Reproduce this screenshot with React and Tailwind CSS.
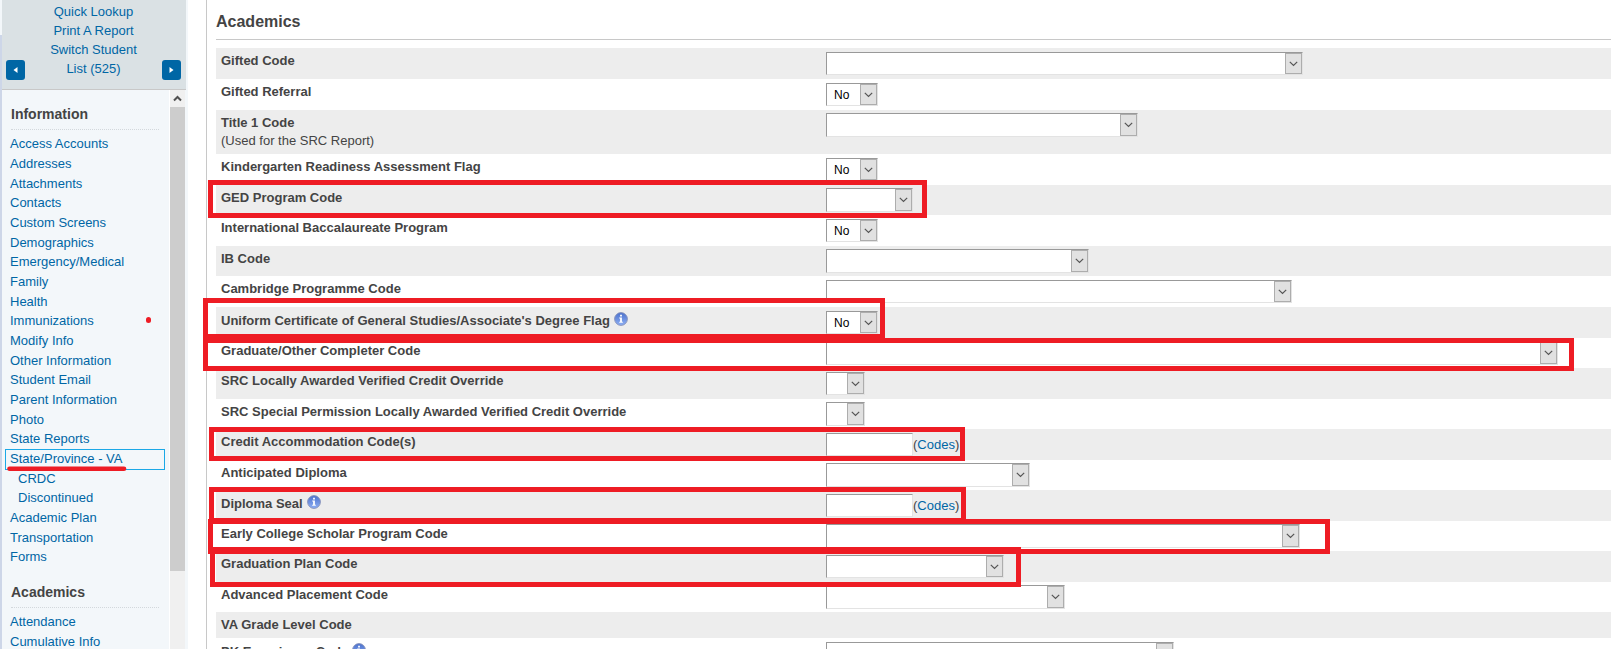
import { useId } from 'react';

const infoLinks = [
  { label: 'Access Accounts' },
  { label: 'Addresses' },
  { label: 'Attachments' },
  { label: 'Contacts' },
  { label: 'Custom Screens' },
  { label: 'Demographics' },
  { label: 'Emergency/Medical' },
  { label: 'Family' },
  { label: 'Health' },
  { label: 'Immunizations', dot: true },
  { label: 'Modify Info' },
  { label: 'Other Information' },
  { label: 'Student Email' },
  { label: 'Parent Information' },
  { label: 'Photo' },
  { label: 'State Reports' },
  { label: 'State/Province - VA', active: true },
  { label: 'CRDC', child: true },
  { label: 'Discontinued', child: true },
  { label: 'Academic Plan' },
  { label: 'Transportation' },
  { label: 'Forms' },
];

const academicLinks = [{ label: 'Attendance' }, { label: 'Cumulative Info' }];

// mark: position of the red highlight box around a row
const fields = [
  { label: 'Gifted Code', type: 'select', width: 'w-[477px]', tall: true },
  { label: 'Gifted Referral', type: 'select', width: 'w-[52px]', value: 'No', tall: true },
  { label: 'Title 1 Code', note: '(Used for the SRC Report)', type: 'select', width: 'w-[312px]' },
  { label: 'Kindergarten Readiness Assessment Flag', type: 'select', width: 'w-[52px]', value: 'No', tall: true },
  { label: 'GED Program Code', type: 'select', width: 'w-[87px]', mark: '-left-2 -top-[5px] -bottom-[3px] w-[719px]' },
  { label: 'International Baccalaureate Program', type: 'select', width: 'w-[52px]', value: 'No', tall: true },
  { label: 'IB Code', type: 'select', width: 'w-[263px]' },
  { label: 'Cambridge Programme Code', type: 'select', width: 'w-[466px]', tall: true },
  { label: "Uniform Certificate of General Studies/Associate's Degree Flag", info: true, type: 'select', width: 'w-[52px]', value: 'No', tall: true, mark: '-left-[13px] -top-[9px] -bottom-px w-[682px]' },
  { label: 'Graduate/Other Completer Code', type: 'select', width: 'w-[732px]', mark: '-left-[13px] top-0 -bottom-[3px] w-[1371px]' },
  { label: 'SRC Locally Awarded Verified Credit Override', type: 'select', width: 'w-[39px]', tall: true },
  { label: 'SRC Special Permission Locally Awarded Verified Credit Override', type: 'select', width: 'w-[39px]' },
  { label: 'Credit Accommodation Code(s)', type: 'text', tall: true, mark: '-left-[7px] -top-0.5 -bottom-px w-[756px]' },
  { label: 'Anticipated Diploma', type: 'select', width: 'w-[204px]' },
  { label: 'Diploma Seal', info: true, type: 'text', tall: true, mark: '-left-[7px] -top-[3px] -bottom-0.5 w-[757px]' },
  { label: 'Early College Scholar Program Code', type: 'select', width: 'w-[474px]', mark: '-left-2 -top-0.5 -bottom-[3px] w-[1122px]' },
  { label: 'Graduation Plan Code', type: 'select', width: 'w-[178px]', tall: true, mark: '-left-1.5 -top-1 -bottom-[5px] w-[811px]' },
  { label: 'Advanced Placement Code', type: 'select', width: 'w-[239px]' },
  { label: 'VA Grade Level Code', type: 'none' },
  { label: 'PK Experience Code', info: true, type: 'select', width: 'w-[348px]', tall: true },
];

const InfoIcon = () => (
  <svg className="h-3.5 w-3.5 shrink-0" viewBox="0 0 14 14" aria-hidden="true">
    <defs>
      <linearGradient id="info-fill" x1="0" y1="0" x2="0" y2="1">
        <stop offset="0" stopColor="#4a70cc" />
        <stop offset="1" stopColor="#8fb0f4" />
      </linearGradient>
    </defs>
    <circle cx="7" cy="7" r="6.4" fill="url(#info-fill)" stroke="#8590b8" strokeWidth="0.9" />
    <path d="M6.100 2.700h1.800v1.800H6.100zM5.200 5.500h2.700v4.300h0.900v1H5.200v-1h0.900V6.500H5.200z" fill="#fff" />
  </svg>
);

const SelectField = ({ id, width, value, tall }) => (
  <div className={`relative ${width}`}>
    <select
      id={id}
      defaultValue={value || ''}
      className={`block w-full appearance-none border border-t-[#999] border-r-[#e3e3e3] border-b-[#e3e3e3] border-l-[#999] bg-white pl-[7px] text-xs text-black ${tall ? 'h-[23px]' : 'h-6'}`}
    >
      {value ? (
        <>
          <option>No</option>
          <option>Yes</option>
        </>
      ) : (
        <option value=""></option>
      )}
    </select>
    <span className="pointer-events-none absolute top-px right-px bottom-px flex w-[17px] items-center justify-center border border-[#adadad] bg-[#e1e1e1]">
      <svg width="9" height="6" viewBox="0 0 9 6" fill="none" aria-hidden="true">
        <path d="M0.8 0.8 4.5 4.5 8.2 0.8" stroke="#555" strokeWidth="1.2" />
      </svg>
    </span>
  </div>
);

const FieldRow = ({ field }) => {
  const id = useId();
  const height = field.note ? 'h-11' : field.type === 'none' ? 'h-[26px]' : field.tall ? 'h-[31px]' : 'h-[30px]';

  return (
    <div className={`relative grid shrink-0 grid-cols-[610px_1fr] odd:bg-[#ededed] ${height}`}>
      <div className={`pl-[5px] leading-[18px] ${field.info ? 'pt-[5px]' : 'pt-1'}`}>
        <div className="flex gap-1">
          {field.type === 'none' ? (
            <span className="font-bold">{field.label}</span>
          ) : (
            <label htmlFor={id} className="font-bold">{field.label}</label>
          )}
          {field.info && <InfoIcon />}
        </div>
        {field.note && <p>{field.note}</p>}
      </div>
      <div className={field.tall ? 'pt-1' : 'pt-[3px]'}>
        {field.type === 'select' && <SelectField id={id} width={field.width} value={field.value} tall={field.tall} />}
        {field.type === 'text' && (
          <div className="flex items-center">
            <input
              id={id}
              type="text"
              className="h-[23px] w-[87px] border border-t-[#999] border-r-[#e3e3e3] border-b-[#e3e3e3] border-l-[#999] bg-white px-1"
            />
            <span>
              (<a href="#codes" className="text-[#0066a5]">Codes</a>)
            </span>
          </div>
        )}
      </div>
      {field.mark && <div className={`pointer-events-none absolute z-10 border-5 border-[#ee1c24] ${field.mark}`} />}
    </div>
  );
};

const NavSection = ({ title, links }) => (
  <section className="pt-3.5 pb-px">
    <h2 className="mr-2.5 ml-[9px] border-b border-dotted border-[#d3d8dc] pb-[5px] text-sm leading-5 font-bold">{title}</h2>
    <ul className="mt-1 mr-1 ml-[3px]">
      {links.map((link) => (
        <li key={link.label} className="relative h-5 leading-5 nth-[3n]:h-[19px]">
          <a
            href="#screen"
            className={`block text-[#0066a5] ${link.active ? 'h-[21px] border border-[#1ba8e6] px-1 leading-[18px]' : link.child ? 'pl-[13px]' : 'pl-[5px]'}`}
          >
            {link.label}
          </a>
          {link.active && (
            <svg className="absolute top-4 left-0.5" width="120" height="7" viewBox="0 0 120 7" aria-hidden="true">
              <path d="M2.500 3.800H117" fill="none" stroke="#ee1c24" strokeWidth="4.600" strokeLinecap="round" />
            </svg>
          )}
          {link.dot && <span className="absolute top-1.5 right-3.5 h-1.5 w-[5px] rounded-sm bg-[#ee1c24]" />}
        </li>
      ))}
    </ul>
  </section>
);

const Sidebar = () => (
  <aside className="flex w-[188px] shrink-0 bg-[#f3f7fa]">
    <div className="w-0.5 shrink-0 bg-[#cdd6e8]">
      <div className="h-[35px] bg-[#f3f7fa]" />
    </div>
    <div className="flex min-w-0 flex-1 flex-col">
      <div className="mr-0.5 flex items-end justify-between border-b border-[#c8c8c8] bg-[#dae1e4] pt-0.5 pr-[5px] pb-[9px] pl-1">
        <button type="button" aria-label="Previous student" className="flex h-5 w-[19px] items-center justify-center rounded-[3px] bg-[#0066a5]">
          <svg width="5" height="6" viewBox="0 0 5 6" aria-hidden="true">
            <path d="M4.500 0v6L0.500 3z" fill="#fff" />
          </svg>
        </button>
        <nav className="flex flex-col items-center pb-0.5 leading-[19px] text-[#0066a5]">
          <a href="#lookup">Quick Lookup</a>
          <a href="#report">Print A Report</a>
          <a href="#switch">Switch Student</a>
          <a href="#list">List (525)</a>
        </nav>
        <button type="button" aria-label="Next student" className="flex h-5 w-[19px] items-center justify-center rounded-[3px] bg-[#0066a5]">
          <svg width="5" height="6" viewBox="0 0 5 6" aria-hidden="true">
            <path d="M0.500 0v6L4.500 3z" fill="#fff" />
          </svg>
        </button>
      </div>
      <div className="mr-[3px] flex min-h-0 flex-1">
        <nav className="min-w-0 flex-1 overflow-hidden">
          <NavSection title="Information" links={infoLinks} />
          <NavSection title="Academics" links={academicLinks} />
        </nav>
        <div className="flex w-4 shrink-0 flex-col border-l border-white bg-[#f0f0f0]">
          <div className="flex h-[17px] shrink-0 items-center justify-center">
            <svg width="9" height="7" viewBox="0 0 9 7" fill="none" aria-hidden="true">
              <path d="M1 5.500 4.500 2 8 5.500" stroke="#505050" strokeWidth="2" />
            </svg>
          </div>
          <div className="h-[83%] bg-[#cdcdcd]" />
        </div>
      </div>
    </div>
  </aside>
);

const App = () => {
  return (
    <div className="flex h-screen overflow-hidden bg-white font-['Liberation_Sans',Arial,sans-serif] text-[13px] text-[#444]">
      <Sidebar />
      <main className="ml-[18px] flex min-w-0 flex-1 flex-col border-l border-[#c8c8c8] pl-[9px]">
        <h1 className="mb-2 shrink-0 border-b border-[#c8c8c8] pt-3 pb-[7px] text-base leading-5 font-bold">Academics</h1>
        <form className="flex flex-col">
          {fields.map((field) => (
            <FieldRow key={field.label} field={field} />
          ))}
        </form>
      </main>
    </div>
  );
};

export default App;
